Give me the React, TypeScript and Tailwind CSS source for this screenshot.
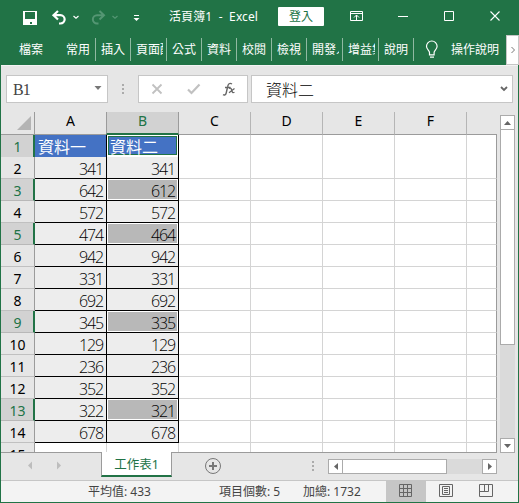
import { ReactNode } from "react";

type Row = { n: number; a: string; b: string; hit?: boolean };

const UI = "font-['Noto_Sans','Noto_Sans_CJK_TC',sans-serif]";
const SHEET = "font-['Open_Sans','Noto_Sans_CJK_TC',sans-serif]";

const rows: Row[] = [
  { n: 2, a: "341", b: "341" },
  { n: 3, a: "642", b: "612", hit: true },
  { n: 4, a: "572", b: "572" },
  { n: 5, a: "474", b: "464", hit: true },
  { n: 6, a: "942", b: "942" },
  { n: 7, a: "331", b: "331" },
  { n: 8, a: "692", b: "692" },
  { n: 9, a: "345", b: "335", hit: true },
  { n: 10, a: "129", b: "129" },
  { n: 11, a: "236", b: "236" },
  { n: 12, a: "352", b: "352" },
  { n: 13, a: "322", b: "321", hit: true },
  { n: 14, a: "678", b: "678" },
];

const tabs = [
  { label: "常用", width: "w-[35px]" },
  { label: "插入", width: "w-[35px]" },
  { label: "頁面配", width: "w-[36px]" },
  { label: "公式", width: "w-[35px]" },
  { label: "資料", width: "w-[35px]" },
  { label: "校閱", width: "w-[35px]" },
  { label: "檢視", width: "w-[35px]" },
  { label: "開發人", width: "w-[36px]" },
  { label: "增益集", width: "w-[36px]" },
  { label: "說明", width: "w-[35px]" },
];

function TitleBar() {
  return (
    <div className="relative h-[34px] shrink-0 text-white">
      <svg className="absolute inset-0" width="519" height="34" fill="none">
        <path d="M23.5 11.5h13v13h-13z" stroke="#fff" />
        <path d="M23 11h2v8h10v-8h2v14h-5v-3h-5v3h-4zM27 22h3v3h-3z" fill="#fff" />
        <path d="M58 11l-4.500 4.200 4.500 4.300M54 15.200h6.500a4 4 0 0 1 0 8.300H59" stroke="#fff" strokeWidth="2.200" />
        <path d="M73.500 16l2.500 2.300 2.500-2.300" stroke="#fff" strokeWidth="1.200" />
        <path d="M99 11l4.500 4.200-4.500 4.300M103 15.200h-6.500a4 4 0 0 0 0 8.300H98" stroke="#549673" strokeWidth="2" transform="translate(.5 0)" />
        <path d="M112.500 16l2.500 2.300 2.500-2.300" stroke="#549673" strokeWidth="1.200" />
        <path d="M134 15.500h5" stroke="#fff" />
        <path d="M133.500 18h6l-3 3z" fill="#fff" />
        <path d="M350.500 11.500h12v9h-12zM350.500 13.500h12M356.500 20v-5M354 17.500l2.500-2.500 2.500 2.500" stroke="#fff" />
        <path d="M398 16.500h10" stroke="#fff" />
        <path d="M444.500 11.500h9v9h-9z" stroke="#fff" />
        <path d="M490.500 11.500l9 9M499.500 11.500l-9 9" stroke="#fff" strokeWidth="1.100" />
      </svg>
      <div className="flex h-full pl-[169px]">
        <span className="mt-[7px] w-[109px] text-[12px] leading-5 tracking-[0.100px] whitespace-pre">活頁簿1  -  Excel</span>
        <button className="mt-[7px] h-[19px] w-[46px] rounded-[1px] bg-white text-[12px] leading-[19px] text-[#217346]">
          登入
        </button>
      </div>
    </div>
  );
}

function Ribbon() {
  return (
    <div className="flex h-[31px] shrink-0 text-[12px] leading-[31px] text-white">
      <span className="w-[60px] pl-[18px]">檔案</span>
      {tabs.map((tab) => (
        <div
          key={tab.label}
          className={`${tab.width} mt-1 h-[23px] shrink-0 border-r border-[#90b9a2] pl-[5px] leading-[23px]`}
        >
          <div className="w-[27px] overflow-hidden whitespace-nowrap">{tab.label}</div>
        </div>
      ))}
      <svg className="mt-[6px] ml-[11px] shrink-0" width="14" height="20" fill="none" stroke="#fff" strokeWidth="1.200">
        <path d="M4.500 12.500c0-2-3-3-3-6.200a5.300 5.300 0 0 1 10.600 0c0 3.200-3 4.200-3 6.200v2.300H4.500zM5 17.200h4" />
      </svg>
      <span className="ml-[12px] w-[55px] shrink-0 whitespace-nowrap">操作說明</span>
      <div className="mt-[1px] flex h-[30px] w-[13px] shrink-0 items-center justify-center border border-[#c6c6c6] bg-white">
        <svg width="6" height="8" fill="none" stroke="#777">
          <path d="M1.500 1l3 3-3 3" />
        </svg>
      </div>
    </div>
  );
}

function FormulaBar() {
  return (
    <div className="flex h-[47px] shrink-0 items-start border-t border-[#f3f3f3] pt-[9px] pl-[5px] text-[#444]">
      <div className="flex h-7 w-[102px] items-center justify-between border border-[#c6c6c6] bg-white pr-[5px] pl-[6px]">
        <span className="pt-[2px] font-['Liberation_Serif',serif] text-[16px] tracking-[-0.800px]">B1</span>
        <svg width="8" height="5" className="mb-px">
          <path d="M0.500 0h7l-3.500 4z" fill="#777" />
        </svg>
      </div>
      <svg width="30" height="28" fill="#ababab">
        <path d="M14 9h2v2h-2zM14 13h2v2h-2zM14 17h2v2h-2z" />
      </svg>
      <div className="h-7 w-[110px] border border-[#c6c6c6] bg-white">
        <svg width="108" height="26" fill="none">
          <path d="M13.500 8.500l9 9M22.500 8.500l-9 9" stroke="#c1c1c1" strokeWidth="1.800" />
          <path d="M49 13.500l3.500 3.500 8-8.500" stroke="#c1c1c1" strokeWidth="2.200" />
          <path d="M93 8c-2.500-1.500-3.800 0-4.300 2.500l-1.500 6.500c-.5 2-1.700 2.500-3.200 1.700M86 11.500h5.500" stroke="#666" strokeWidth="1.400" />
          <path d="M90 12.500c2-.8 2.300 0 2.800 2s1 2.600 2.700 1.700M95.500 12.500l-5.500 4.200" stroke="#666" strokeWidth="1.300" />
        </svg>
      </div>
      <div className={`${SHEET} ml-[3px] flex h-7 w-[262px] items-center justify-between border border-[#c6c6c6] bg-white pr-1 pl-[14px] text-[16px]`}>
        <span className="pt-px font-light text-black">資料二</span>
        <svg width="8" height="6" fill="none" stroke="#666" strokeWidth="1.800">
          <path d="M1 1l3 3 3-3" />
        </svg>
      </div>
    </div>
  );
}

const GRID = "grid grid-cols-[34px_repeat(6,72px)_30px]";

function Blank({ from = 0 }: { from?: number }) {
  return (
    <>
      {[0, 1, 2, 3, 4, 5].slice(from).map((i) => (
        <div key={i} className="border-r border-b border-[#d4d4d4] bg-white" />
      ))}
      <div className="border-r border-b border-r-[#9b9b9b] border-b-[#d4d4d4] bg-white" />
    </>
  );
}

function RowHead({ n, on }: { n: number; on?: boolean }) {
  return (
    <div
      className={`overflow-hidden pt-px text-center text-[14px] leading-[21px] ${
        on
          ? "border-r-2 border-b border-r-[#217346] border-b-[#b8b8b8] bg-[#d2d2d2] pl-px text-[#217346]"
          : "border-r border-b border-r-[#9b9b9b] border-b-[#c0c0c0] bg-[#e6e6e6] text-black"
      }`}
    >
      {n}
    </div>
  );
}

function Cell({ children, hit }: { children: ReactNode; hit?: boolean }) {
  return (
    <div
      className={`border-r border-b border-black p-px text-right text-[16px] font-light tracking-[-1.100px] text-black ${SHEET} ${
        hit ? "bg-white" : "bg-[#ededed]"
      }`}
    >
      <div className={`h-[19px] pr-[2px] leading-[22px] ${hit ? "bg-[#b8b8b8]" : ""}`}>{children}</div>
    </div>
  );
}

function Sheet() {
  return (
    <div className="w-[496px] shrink-0">
      <div className={`${GRID} h-[23px] text-center text-[14px] leading-[18px] text-black`}>
        <div className="flex items-end justify-end border-r border-b border-[#9b9b9b] pr-[3px] pb-1">
          <svg width="14" height="14">
            <path d="M14 0v14H0z" fill="#b4b4b4" />
          </svg>
        </div>
        <div className="border-r border-b border-[#9b9b9b]">A</div>
        <div className="-ml-px border-r border-b-2 border-l border-x-[#9b9b9b] border-b-[#217346] bg-[#d2d2d2] text-[#217346]">B</div>
        {["C", "D", "E", "F"].map((c) => (
          <div key={c} className="border-r border-b border-r-[#b5b5b5] border-b-[#9b9b9b]">{c}</div>
        ))}
        <div className="border-b border-[#9b9b9b]" />
      </div>
      <div className={`${GRID} h-[22px]`}>
        <RowHead n={1} on />
        <div className={`border-r border-b border-black bg-[#4472c4] pl-[3px] text-[16px] leading-[25px] text-white ${SHEET}`}>資料一</div>
        <div className="border-r border-b border-black bg-white p-px">
          <div className={`h-[19px] border border-[#217346] bg-[#4472c4] pl-px text-[16px] leading-[21px] text-white ${SHEET}`}>資料二</div>
        </div>
        <Blank from={2} />
      </div>
      {rows.map((r) => (
        <div key={r.n} className={`${GRID} h-[22px]`}>
          <RowHead n={r.n} on={r.hit} />
          <Cell>{r.a}</Cell>
          <Cell hit={r.hit}>{r.b}</Cell>
          <Blank from={2} />
        </div>
      ))}
      <div className={`${GRID} h-[10px] grid-rows-[22px] overflow-hidden border-b border-[#9b9b9b]`}>
        <RowHead n={15} />
        <Blank />
      </div>
    </div>
  );
}

function ScrollBar() {
  return (
    <div className="mt-[3px] ml-[3px] flex h-[338px] w-[15px] flex-col bg-[#dadada]">
      <div className="flex h-[15px] items-center justify-center border border-[#ababab] bg-white">
        <svg width="7" height="4">
          <path d="M0 4h7L3.500 0z" fill="#666" />
        </svg>
      </div>
      <div className="-mt-px h-[216px] border border-[#ababab] bg-white" />
      <div className="mt-auto flex h-[15px] items-center justify-center border border-[#ababab] bg-white">
        <svg width="7" height="4">
          <path d="M0 0h7L3.500 4z" fill="#666" />
        </svg>
      </div>
    </div>
  );
}

function SheetTabs() {
  return (
    <div className="flex h-[27px] shrink-0">
      <svg width="100" height="27" fill="#bdbdbd">
        <path d="M31 8.500v8l-4-4zM56 8.500v8l4-4z" />
      </svg>
      <div className="-mt-px h-[25px] w-[71px] border-x border-b-2 border-x-[#9b9b9b] border-b-[#217346] bg-white text-center text-[12.500px] leading-[25px] text-[#217346]">
        工作表1
      </div>
      <svg className="ml-[33px]" width="17" height="27" fill="none" stroke="#777">
        <circle cx="8" cy="13" r="7.500" />
        <path d="M4 13h8M8 9v8" strokeWidth="2" />
      </svg>
      <svg className="ml-[90px]" width="4" height="27" fill="#ababab">
        <path d="M0 8h2v2H0zM0 12h2v2H0zM0 16h2v2H0z" />
      </svg>
      <div className="mt-[6px] ml-[12px] flex h-[15px] w-[169px] bg-[#dadada]">
        <div className="flex w-[15px] items-center justify-center border border-[#ababab] bg-white">
          <svg width="4" height="7">
            <path d="M4 0v7L0 3.500z" fill="#666" />
          </svg>
        </div>
        <div className="-ml-px w-[105px] border border-[#ababab] bg-white" />
        <div className="ml-auto flex w-[15px] items-center justify-center border border-[#ababab] bg-white">
          <svg width="4" height="7">
            <path d="M0 0v7l4-3.500z" fill="#666" />
          </svg>
        </div>
      </div>
    </div>
  );
}

function StatusBar() {
  return (
    <div className="flex h-[22px] shrink-0 border-t border-[#c6c6c6] bg-[#f3f3f3] text-[12px] leading-[21px] text-[#444]">
      <span className="w-[131px] shrink-0 pl-[87px] whitespace-nowrap">平均值: 433</span>
      <span className="ml-[87px] w-[84px] shrink-0 whitespace-nowrap">項目個數: 5</span>
      <span className="w-[83px] shrink-0 whitespace-nowrap">加總: 1732</span>
      <div className="w-10 shrink-0 bg-[#c6c6c6]">
        <svg width="40" height="21" fill="none" stroke="#666">
          <path d="M13.500 3.500h12v12h-12zM17.500 3.500v12M21.500 3.500v12M13.500 7.500h12M13.500 11.500h12" />
        </svg>
      </div>
      <svg width="88" height="21" fill="none" stroke="#666">
        <path d="M13.500 3.500h13v12h-13zM16.500 5.500h7v8h-7zM18 7.500h4M18 9.500h4M18 11.500h4M53.500 3.500h13v12h-13zM53.500 10.500h9v-7M58.500 3.500v7" />
      </svg>
    </div>
  );
}

export default function App() {
  return (
    <div className={`flex h-[503px] w-[519px] flex-col overflow-hidden bg-[#217346] ${UI}`}>
      <TitleBar />
      <div className="pl-px">
        <Ribbon />
      </div>
      <div className="mx-px mb-px flex flex-1 flex-col bg-[#e6e6e6]">
        <FormulaBar />
        <div className="flex h-[341px] shrink-0">
          <Sheet />
          <ScrollBar />
        </div>
        <SheetTabs />
        <StatusBar />
      </div>
    </div>
  );
}
